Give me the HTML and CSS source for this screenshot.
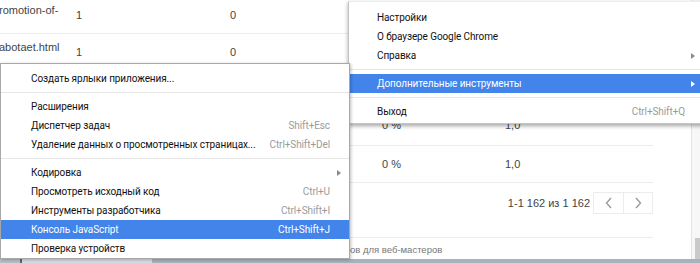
FILE: index.html
```html
<!DOCTYPE html>
<html lang="ru">
<head>
<meta charset="utf-8">
<title>Chrome menu</title>
<link rel="stylesheet" href="styles.css">
</head>
<body>
<div class="window">
  <div class="content">
    <div class="main-area">
      <div class="table">
        <div class="row r1">
          <span class="c c1 t1">romotion-of-</span>
          <span class="c c2 t2">1</span>
          <span class="c c3 t2">0</span>
        </div>
        <div class="row r2">
          <span class="c c1 t3">abotaet.html</span>
          <span class="c c2 t4">1</span>
          <span class="c c3 t4">0</span>
        </div>
        <div class="row r3">
          <span class="c c1"></span>
          <span class="c c2">1</span>
          <span class="c c3">0</span>
        </div>
        <div class="row r4">
          <span class="c c1"></span><span class="c c2"></span><span class="c c3"></span>
          <span class="c c4">0 %</span>
          <span class="c c5">1,0</span>
        </div>
        <div class="row rc">
          <span class="c c1"></span><span class="c c2"></span><span class="c c3"></span>
          <span class="c c4">0 %</span>
          <span class="c c5">1,0</span>
        </div>
      </div>
      <div class="pager">
        <span class="pager-text">1-1 162 из 1 162</span>
        <div class="pager-btns">
          <span class="pbtn"><svg width="8" height="12" viewBox="0 0 8 12"><polyline points="6,1 1.5,6 6,11" fill="none" stroke="#9a9a9a" stroke-width="1.4"/></svg></span>
          <span class="pbtn"><svg width="8" height="12" viewBox="0 0 8 12"><polyline points="2,1 6.5,6 2,11" fill="none" stroke="#9a9a9a" stroke-width="1.4"/></svg></span>
        </div>
      </div>
      <div class="footer">ов для веб-мастеров</div>
    </div>
    <div class="scrollbar"><div class="thumb"></div></div>
  </div>
  <div class="taskbar"><span class="tb-a"></span><span class="tb-b"></span><span class="tb-c"></span></div>
</div>

<div class="menu main-menu">
  <div class="item"><span class="label">Настройки</span><span class="key"></span><span class="arr"></span></div>
  <div class="item"><span class="label">О браузере Google Chrome</span><span class="key"></span><span class="arr"></span></div>
  <div class="item"><span class="label">Справка</span><span class="key"></span><span class="arr"><i class="tri"></i></span></div>
  <div class="sep"></div>
  <div class="item hl"><span class="label">Дополнительные инструменты</span><span class="key"></span><span class="arr"><i class="tri"></i></span></div>
  <div class="sep"></div>
  <div class="item"><span class="label">Выход</span><span class="key">Ctrl+Shift+Q</span><span class="arr"></span></div>
</div>

<div class="menu sub-menu">
  <div class="item"><span class="label">Создать ярлыки приложения...</span><span class="key"></span><span class="arr"></span></div>
  <div class="sep"></div>
  <div class="item"><span class="label">Расширения</span><span class="key"></span><span class="arr"></span></div>
  <div class="item"><span class="label">Диспетчер задач</span><span class="key">Shift+Esc</span><span class="arr"></span></div>
  <div class="item"><span class="label">Удаление данных о просмотренных страницах...</span><span class="key">Ctrl+Shift+Del</span><span class="arr"></span></div>
  <div class="sep"></div>
  <div class="item"><span class="label">Кодировка</span><span class="key"></span><span class="arr"><i class="tri"></i></span></div>
  <div class="item"><span class="label">Просмотреть исходный код</span><span class="key">Ctrl+U</span><span class="arr"></span></div>
  <div class="item"><span class="label">Инструменты разработчика</span><span class="key">Ctrl+Shift+I</span><span class="arr"></span></div>
  <div class="item hl"><span class="label">Консоль JavaScript</span><span class="key">Ctrl+Shift+J</span><span class="arr"></span></div>
  <div class="item"><span class="label">Проверка устройств</span><span class="key"></span><span class="arr"></span></div>
</div>
</body>
</html>
```

FILE: styles.css
```css
* { box-sizing: border-box; }
html, body {
  margin: 0;
  padding: 0;
  width: 700px;
  height: 263px;
  overflow: hidden;
  background: #fff;
}
body {
  position: relative;
  font-family: "Liberation Sans", Arial, sans-serif;
  font-size: 11px;
  color: #444;
}
.window {
  display: flex;
  flex-direction: column;
  height: 263px;
}
.content {
  display: flex;
  height: 259px;
}
.main-area {
  width: 691px;
  display: flex;
  flex-direction: column;
}
.table {
  width: 653px;
  display: flex;
  flex-direction: column;
}
.row {
  display: grid;
  grid-template-columns: 76px 154px 152px 123px 148px;
  border-bottom: 1px solid #ececec;
}
.c { line-height: 14px; white-space: nowrap; }
.c1 { margin-left: -1px; }
.r1 { height: 34px; align-items: start; }
.r2 { height: 38px; align-items: start; }
.r3 { height: 37px; align-items: center; }
.r4 { height: 37px; align-items: start; padding-top: 9px; }
.rc { height: 37px; align-items: center; }
.t1 { padding-top: 3px; }
.t2 { padding-top: 8px; }
.t3 { padding-top: 6px; }
.t4 { padding-top: 11px; }
.pager {
  width: 653px;
  height: 55px;
  border-bottom: 1px solid #ececec;
  display: flex;
  justify-content: flex-end;
  align-items: flex-start;
  padding-top: 9px;
}
.pager-text {
  line-height: 22px;
  margin-right: 3px;
  color: #444;
}
.pager-btns {
  display: flex;
  border: 1px solid #ececec;
  height: 22px;
}
.pbtn {
  width: 29px;
  height: 20px;
  display: flex;
  align-items: center;
  justify-content: center;
}
.pbtn + .pbtn { border-left: 1px solid #ececec; }
.footer {
  height: 21px;
  padding-left: 350px;
  padding-top: 5px;
  font-size: 9.5px;
  color: #777;
  line-height: 13px;
}
.scrollbar {
  width: 9px;
  border-left: 1px solid #e4e4e4;
  background: #f7f7f7;
  display: flex;
  flex-direction: column;
  justify-content: flex-end;
  align-items: flex-end;
}
.thumb {
  width: 5px;
  height: 21px;
  background: #c9c9c9;
}
.taskbar {
  height: 4px;
  background: #a9b2ba;
  display: flex;
}
.tb-a { width: 20px; background: #b8c0c7; }
.tb-b { width: 2px; background: #5d6770; }
.tb-c { width: 130px; background: #d8dde1; }

/* menus */
.menu {
  position: absolute;
  background: #fff;
  font-family: Roboto, "Liberation Sans", sans-serif;
  font-size: 10px;
  letter-spacing: -0.1px;
  color: #111;
  display: flex;
  flex-direction: column;
}
.main-menu {
  left: 348px;
  top: 1px;
  width: 356px;
  border: 1px solid #c4c4c4;
  border-top-color: #ededed;
  padding: 6px 0 2px;
  box-shadow: 0 2px 4px rgba(0,0,0,0.35);
}
.sub-menu {
  left: 0;
  top: 63px;
  width: 350px;
  border: 1px solid #a8a8a8;
  padding: 5px 0 0;
  box-shadow: 1px 1px 3px rgba(0,0,0,0.25);
}
.item {
  height: 19px;
  display: flex;
  align-items: center;
  white-space: nowrap;
}
.main-menu .item { padding-left: 28px; }
.sub-menu .item { padding-left: 30px; }
.label { flex: 1; }
.key { color: #9b9b9b; }
.main-menu .arr { width: 18px; padding-left: 6px; }
.sub-menu .arr { width: 19px; padding-left: 7px; }
.arr { display: flex; align-items: center; height: 19px; }
.tri {
  display: block;
  width: 0;
  height: 0;
  border-top: 3px solid transparent;
  border-bottom: 3px solid transparent;
  border-left: 4px solid #8a8a8a;
}
.sep {
  height: 9px;
  display: flex;
  align-items: center;
}
.sep::before {
  content: "";
  display: block;
  width: 100%;
  height: 1px;
  background: #e6e6e6;
}
.item.hl { background: #4284ea; color: #fff; }
.item.hl .key { color: #fff; }
.item.hl .tri { border-left-color: #fff; }
```
